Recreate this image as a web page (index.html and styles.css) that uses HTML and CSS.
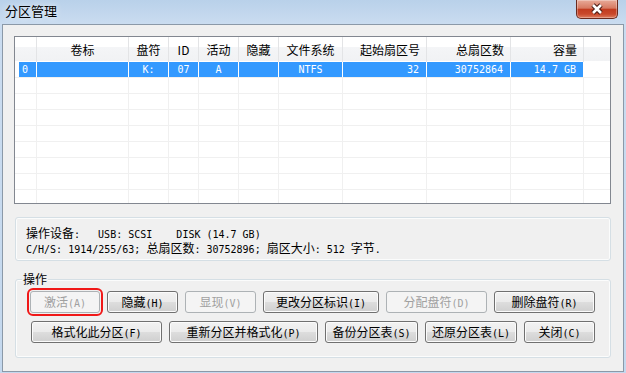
FILE: index.html
```html
<!DOCTYPE html>
<html lang="zh-CN">
  <head>
    <meta charset="UTF-8" />
    <title>分区管理</title>
    <link rel="stylesheet" href="styles.css">
  </head>
  <body>
    <div class="window">
      <div class="titlebar">
        <span class="title">分区管理</span>
        <div class="close-btn">
          <svg width="14" height="12" viewBox="0 0 14 12">
            <path d="M3 2 L11 10 M11 2 L3 10" stroke="#4a1a12" stroke-width="4.6" fill="none" />
            <path d="M3 2 L11 10 M11 2 L3 10" stroke="#fff" stroke-width="2.6" fill="none" />
          </svg>
        </div>
      </div>

      <div class="client">
        <div class="listview">
          <div class="lv-header cols">
            <div></div>
            <div>卷标</div>
            <div>盘符</div>
            <div>ID</div>
            <div>活动</div>
            <div>隐藏</div>
            <div>文件系统</div>
            <div class="r">起始扇区号</div>
            <div class="r">总扇区数</div>
            <div class="r">容量</div>
            <div class="filler"></div>
          </div>
          <div class="lv-body">
            <div class="lv-row cols selected">
              <div class="first">0</div>
              <div></div>
              <div>K:</div>
              <div>07</div>
              <div>A</div>
              <div></div>
              <div>NTFS</div>
              <div class="r">32</div>
              <div class="r">30752864</div>
              <div class="r">14.7 GB</div>
              <div class="filler"></div>
            </div>
          </div>
        </div>

        <div class="info">
          <p><span class="cn">操作设备</span>:   USB: SCSI    DISK (14.7 GB)</p>
          <p>C/H/S: 1914/255/63; <span class="cn">总扇区数</span>: 30752896; <span class="cn">扇区大小</span>: 512 <span class="cn">字节</span>.</p>
        </div>

        <div class="group">
          <div class="group-title">操作</div>
          <div class="btn-row">
            <button class="btn disabled focus w70">激活<span class="key">(A)</span></button>
            <button class="btn w71">隐藏<span class="key">(H)</span></button>
            <button class="btn disabled w71">显现<span class="key">(V)</span></button>
            <button class="btn w116">更改分区标识<span class="key">(I)</span></button>
            <button class="btn disabled w101">分配盘符<span class="key">(D)</span></button>
            <button class="btn w101">删除盘符<span class="key">(R)</span></button>
          </div>
          <div class="btn-row">
            <button class="btn w131">格式化此分区<span class="key">(F)</span></button>
            <button class="btn w149">重新分区并格式化<span class="key">(P)</span></button>
            <button class="btn w93">备份分区表<span class="key">(S)</span></button>
            <button class="btn w92">还原分区表<span class="key">(L)</span></button>
            <button class="btn w71">关闭<span class="key">(C)</span></button>
          </div>
        </div>
      </div>
    </div>
  </body>
</html>
```

FILE: styles.css
```css
* {
  margin: 0;
  padding: 0;
  box-sizing: border-box;
}
body {
  width: 626px;
  height: 373px;
  overflow: hidden;
  font-family: "Noto Sans CJK SC", sans-serif;
  font-size: 12px;
  color: #000;
}
.window {
  width: 626px;
  height: 373px;
  display: flex;
  flex-direction: column;
  background: linear-gradient(#b9d1ea, #cadcf0 24px, #c4d8ee);
}

/* title bar */
.titlebar {
  height: 24px;
  display: flex;
  justify-content: space-between;
  align-items: flex-start;
  padding-left: 5px;
}
.title {
  font-size: 13px;
  line-height: 16px;
  margin-top: 3px;
  text-shadow: 0 0 6px rgba(255, 255, 255, 0.9);
}
.close-btn {
  width: 42px;
  height: 19px;
  margin-right: 8px;
  display: flex;
  align-items: center;
  justify-content: center;
  border: 1px solid #6a2a1e;
  border-top: none;
  border-radius: 0 0 5px 5px;
  background: linear-gradient(#e8aa98, #d77a62 45%, #c23c20 52%, #c9482b 78%, #dd7d5f);
  box-shadow: inset 0 0 0 1px rgba(255, 255, 255, 0.3);
}

/* client area */
.client {
  flex: 1;
  margin: 0 2px 1px 2px;
  border: 1px solid #8b99a8;
  background: #f0f0f0;
  display: flex;
  flex-direction: column;
}

/* list view */
.listview {
  margin: 11px 12px 0 11px;
  height: 168px;
  flex-shrink: 0;
  border: 1px solid #828790;
  background: #fff;
  overflow: hidden;
}
.cols {
  display: grid;
  grid-template-columns: 22px 92px 40px 30px 40px 40px 64px 84px 84px 73px 1fr;
}
.lv-header {
  height: 24px;
  margin-bottom: 1px;
  background: linear-gradient(#ffffff 0, #ffffff 42%, #f4f5f7 42%, #f1f2f4 100%);
}
.lv-header div {
  border-right: 1px solid #e3e4e6;
  line-height: 24px;
  padding-top: 1px;
  text-align: center;
}
.lv-header .r {
  text-align: right;
  padding-right: 6px;
}
.lv-header .filler {
  border-right: none;
}
.lv-body {
  height: 141px;
  background:
    linear-gradient(#f0f0f0, #f0f0f0) 21px 0 / 1px 100% no-repeat,
    linear-gradient(#f0f0f0, #f0f0f0) 113px 0 / 1px 100% no-repeat,
    linear-gradient(#f0f0f0, #f0f0f0) 153px 0 / 1px 100% no-repeat,
    linear-gradient(#f0f0f0, #f0f0f0) 183px 0 / 1px 100% no-repeat,
    linear-gradient(#f0f0f0, #f0f0f0) 223px 0 / 1px 100% no-repeat,
    linear-gradient(#f0f0f0, #f0f0f0) 263px 0 / 1px 100% no-repeat,
    linear-gradient(#f0f0f0, #f0f0f0) 327px 0 / 1px 100% no-repeat,
    linear-gradient(#f0f0f0, #f0f0f0) 411px 0 / 1px 100% no-repeat,
    linear-gradient(#f0f0f0, #f0f0f0) 495px 0 / 1px 100% no-repeat,
    linear-gradient(#f0f0f0, #f0f0f0) 568px 0 / 1px 100% no-repeat,
    repeating-linear-gradient(transparent 0, transparent 15px, #f0f0f0 15px, #f0f0f0 16px);
}
.lv-row {
  height: 15px;
  font-family: "DejaVu Sans Mono", monospace;
  font-size: 10px;
  line-height: 15px;
}
.lv-row div {
  text-align: center;
  white-space: pre;
}
.lv-row .first {
  text-align: left;
  padding-left: 7px;
}
.lv-row .r {
  text-align: right;
  padding-right: 7px;
}
.lv-row.selected div {
  background: #3399ff;
  color: #fff;
  border-right: 1px solid #fff;
}
.lv-row.selected .first {
  box-shadow: inset 4px 0 #fff;
}
.lv-row.selected .filler {
  background: none;
  border-right: none;
}

/* device info */
.info,
.group {
  margin: 13px 12px 0 12px;
  flex-shrink: 0;
  border: 1px solid #d5dfe5;
  border-radius: 3px;
  box-shadow: inset 0 0 0 1px #fbfcfc;
}
.info {
  height: 44px;
  padding: 7px 0 0 10px;
  font-family: "DejaVu Sans Mono", monospace;
  font-size: 10px;
}
.info p {
  height: 15px;
  line-height: 15px;
  white-space: pre;
}
.cn {
  font-family: "Noto Sans CJK SC", sans-serif;
  font-size: 12px;
}

/* operations */
.group {
  margin-top: 18px;
  padding: 0 0 14px 14px;
}
.group-title {
  display: table;
  margin: -9px 0 0 -8px;
  padding: 0 1px;
  line-height: 16px;
  background: #f0f0f0;
}
.btn-row {
  display: flex;
  gap: 7px;
  margin-top: 4px;
}
.btn-row + .btn-row {
  margin-top: 8px;
  margin-left: 1px;
}
.btn {
  height: 22px;
  font-family: "Noto Sans CJK SC", sans-serif;
  font-size: 12px;
  line-height: 20px;
  color: #000;
  border: 1px solid #707070;
  border-radius: 3px;
  background: linear-gradient(#f2f2f2, #ebebeb 48%, #dddddd 52%, #cfcfcf);
  box-shadow: inset 0 0 0 1px #fbfbfb;
}
.btn.disabled {
  color: #a0a0a0;
  border-color: #adb2b5;
  background: #f4f4f4;
  box-shadow: none;
}
.btn.focus {
  outline: 2px solid #f01818;
  outline-offset: 1px;
}
.key {
  font-family: "DejaVu Sans Mono", monospace;
  font-size: 10px;
}
.w70 { width: 70px; }
.w71 { width: 71px; }
.w92 { width: 92px; }
.w93 { width: 93px; }
.w101 { width: 101px; }
.w116 { width: 116px; }
.w131 { width: 131px; }
.w149 { width: 149px; }
```
